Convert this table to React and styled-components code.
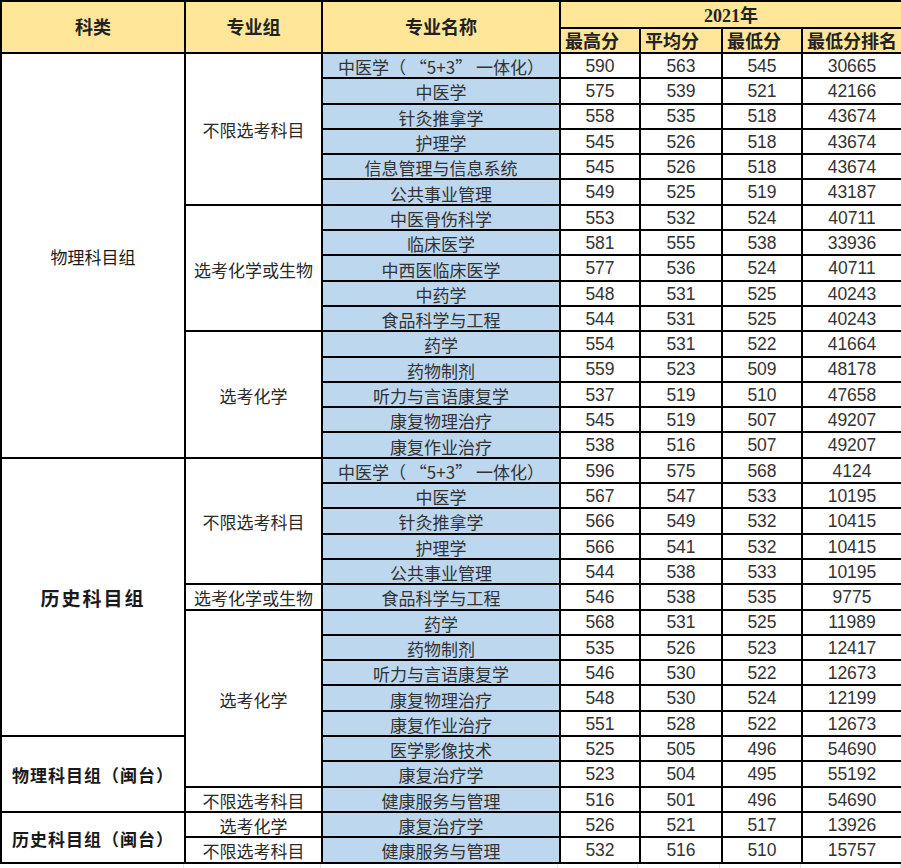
import React from 'react';
import styled, { createGlobalStyle } from 'styled-components';

const GlobalStyle = createGlobalStyle`
    html, body {
        margin: 0;
        padding: 0;
        background: #ffffff;
    }
    body {
        font-family: 'Liberation Sans', 'Noto Sans CJK SC', sans-serif;
        color: #1f1f1f;
    }
`;

const Sheet = styled.table`
    width: 901px;
    table-layout: fixed;
    border-collapse: collapse;
    border: 2px solid #000;
`;

const Col = styled.col`
    width: ${(p) => p.$w}px;
`;

const HeadRow = styled.tr`
    height: ${(p) => p.$h}px;
`;

const BodyRow = styled.tr`
    height: 25.3px;
`;

const HeadCell = styled.th`
    padding: 0;
    border: 2px solid #000;
    background: #ffe699;
    font-family: 'Liberation Serif', 'Noto Sans CJK SC', serif;
    font-weight: bold;
    font-size: 18px;
    line-height: 1;
    color: #222;
    text-align: ${(p) => (p.$left ? 'left' : 'center')};
    padding-left: ${(p) => (p.$left ? '4px' : '0')};
    vertical-align: ${(p) => (p.$low ? 'bottom' : 'middle')};
    padding-bottom: ${(p) => (p.$low ? '1px' : '0')};
    padding-top: ${(p) => (p.$low ? '0' : '2px')};
    white-space: nowrap;
    overflow: hidden;
`;

const Cell = styled.td`
    padding: 2px 0 0;
    border: 2px solid #000;
    font-size: 17px;
    line-height: 1;
    text-align: center;
    vertical-align: middle;
    white-space: nowrap;
    overflow: hidden;
    font-family: 'Noto Sans CJK SC', sans-serif;
    color: #2a2a2a;
`;

const GroupCell = styled(Cell)`
    font-weight: ${(p) => (p.$bold ? 'bold' : 'normal')};
    font-size: ${(p) => (p.$big ? 19 : 17)}px;
    letter-spacing: ${(p) => p.$spacing || 0}px;
    color: #1a1a1a;
`;

const SubjectCell = styled(Cell)``;

const NameCell = styled(Cell)`
    background: #bdd7ee;
    color: #333;
`;

const NumCell = styled(Cell)`
    font-family: 'Liberation Sans', sans-serif;
    font-size: 17.5px;
    color: #333;
`;

const Tail = styled.div`
    display: flex;
    height: 8px;
`;

const TailCell = styled.div`
    width: ${(p) => p.$w}px;
    border-right: 1px solid #e3e3e3;
`;

const rows = [
    // 物理科目组
    { group: { text: '物理科目组', span: 16 }, subject: { text: '不限选考科目', span: 6 }, name: '中医学（ “5+3” 一体化）', v: [590, 563, 545, 30665] },
    { name: '中医学', v: [575, 539, 521, 42166] },
    { name: '针灸推拿学', v: [558, 535, 518, 43674] },
    { name: '护理学', v: [545, 526, 518, 43674] },
    { name: '信息管理与信息系统', v: [545, 526, 518, 43674] },
    { name: '公共事业管理', v: [549, 525, 519, 43187] },
    { subject: { text: '选考化学或生物', span: 5 }, name: '中医骨伤科学', v: [553, 532, 524, 40711] },
    { name: '临床医学', v: [581, 555, 538, 33936] },
    { name: '中西医临床医学', v: [577, 536, 524, 40711] },
    { name: '中药学', v: [548, 531, 525, 40243] },
    { name: '食品科学与工程', v: [544, 531, 525, 40243] },
    { subject: { text: '选考化学', span: 5 }, name: '药学', v: [554, 531, 522, 41664] },
    { name: '药物制剂', v: [559, 523, 509, 48178] },
    { name: '听力与言语康复学', v: [537, 519, 510, 47658] },
    { name: '康复物理治疗', v: [545, 519, 507, 49207] },
    { name: '康复作业治疗', v: [538, 516, 507, 49207] },
    // 历史科目组
    { group: { text: '历史科目组', span: 11, bold: true, big: true, spacing: 2 }, subject: { text: '不限选考科目', span: 5 }, name: '中医学（ “5+3” 一体化）', v: [596, 575, 568, 4124] },
    { name: '中医学', v: [567, 547, 533, 10195] },
    { name: '针灸推拿学', v: [566, 549, 532, 10415] },
    { name: '护理学', v: [566, 541, 532, 10415] },
    { name: '公共事业管理', v: [544, 538, 533, 10195] },
    { subject: { text: '选考化学或生物', span: 1 }, name: '食品科学与工程', v: [546, 538, 535, 9775] },
    { subject: { text: '选考化学', span: 7 }, name: '药学', v: [568, 531, 525, 11989] },
    { name: '药物制剂', v: [535, 526, 523, 12417] },
    { name: '听力与言语康复学', v: [546, 530, 522, 12673] },
    { name: '康复物理治疗', v: [548, 530, 524, 12199] },
    { name: '康复作业治疗', v: [551, 528, 522, 12673] },
    // 物理科目组（闽台）
    { group: { text: '物理科目组（闽台）', span: 3, bold: true, spacing: 1 }, name: '医学影像技术', v: [525, 505, 496, 54690] },
    { name: '康复治疗学', v: [523, 504, 495, 55192] },
    { subject: { text: '不限选考科目', span: 1 }, name: '健康服务与管理', v: [516, 501, 496, 54690] },
    // 历史科目组（闽台）
    { group: { text: '历史科目组（闽台）', span: 2, bold: true, spacing: 1 }, subject: { text: '选考化学', span: 1 }, name: '康复治疗学', v: [526, 521, 517, 13926] },
    { subject: { text: '不限选考科目', span: 1 }, name: '健康服务与管理', v: [532, 516, 510, 15757] },
];

const widths = [184, 137, 238, 80, 82, 80, 100];

const App = () => {
    return (
        <>
            <GlobalStyle />
            <Sheet>
                <colgroup>
                    {widths.map((w, idx) => (
                        <Col key={`col-${idx}`} $w={w} />
                    ))}
                </colgroup>
                <thead>
                    <HeadRow $h={27}>
                        <HeadCell rowSpan={2}>科类</HeadCell>
                        <HeadCell rowSpan={2}>专业组</HeadCell>
                        <HeadCell rowSpan={2}>专业名称</HeadCell>
                        <HeadCell colSpan={4}>2021年</HeadCell>
                    </HeadRow>
                    <HeadRow $h={25}>
                        <HeadCell $left $low>最高分</HeadCell>
                        <HeadCell $left $low>平均分</HeadCell>
                        <HeadCell $left $low>最低分</HeadCell>
                        <HeadCell $left $low>最低分排名</HeadCell>
                    </HeadRow>
                </thead>
                <tbody>
                    {rows.map((row, idx) => (
                        <BodyRow key={`row-${idx}`}>
                            {row.group && (
                                <GroupCell
                                    rowSpan={row.group.span}
                                    $bold={row.group.bold}
                                    $big={row.group.big}
                                    $spacing={row.group.spacing}
                                >
                                    {row.group.text}
                                </GroupCell>
                            )}
                            {row.subject && (
                                <SubjectCell rowSpan={row.subject.span}>
                                    {row.subject.text}
                                </SubjectCell>
                            )}
                            <NameCell>{row.name}</NameCell>
                            {row.v.map((n, i) => (
                                <NumCell key={`n-${idx}-${i}`}>{n}</NumCell>
                            ))}
                        </BodyRow>
                    ))}
                </tbody>
            </Sheet>
            <Tail>
                {widths.map((w, idx) => (
                    <TailCell key={`tail-${idx}`} $w={w} />
                ))}
            </Tail>
        </>
    );
};

export default App;
